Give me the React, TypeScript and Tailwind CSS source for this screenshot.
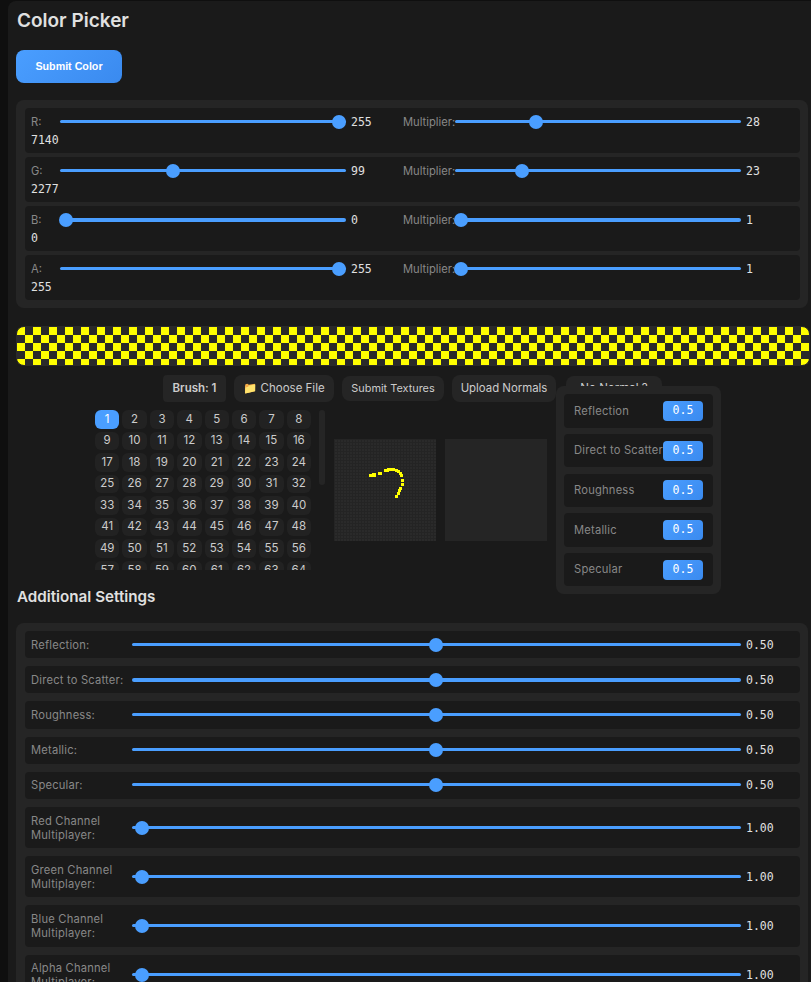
const FONT = "font-['Inter',sans-serif]";
const MONO = "font-['DejaVu_Sans_Mono',monospace]";

const COLOR_ROWS = [
  { label: "R:", value: 255, pos: 1, total: "7140", mult: 28, multPos: 0.272, thick: false },
  { label: "G:", value: 99, pos: 0.388, total: "2277", mult: 23, multPos: 0.22, thick: false },
  { label: "B:", value: 0, pos: -0.003, total: "0", mult: 1, multPos: -0.003, thick: true },
  { label: "A:", value: 255, pos: 1, total: "255", mult: 1, multPos: -0.003, thick: false },
];

const MATERIALS = ["Reflection", "Direct to Scatter", "Roughness", "Metallic", "Specular"];

const SETTINGS = [
  { label: "Reflection:", value: "0.50", pos: 0.4985, thick: false },
  { label: "Direct to Scatter:", value: "0.50", pos: 0.4985, thick: true },
  { label: "Roughness:", value: "0.50", pos: 0.4985, thick: false },
  { label: "Metallic:", value: "0.50", pos: 0.4985, thick: false },
  { label: "Specular:", value: "0.50", pos: 0.4985, thick: false },
  { label: "Red Channel Multiplayer:", value: "1.00", pos: 0.005, thick: false },
  { label: "Green Channel Multiplayer:", value: "1.00", pos: 0.005, thick: false },
  { label: "Blue Channel Multiplayer:", value: "1.00", pos: 0.005, thick: false },
  { label: "Alpha Channel Multiplayer:", value: "1.00", pos: 0.005, thick: false },
];

const BRUSHES = Array.from({ length: 72 }, (_, i) => i + 1);

// pixels of the painted stroke, in canvas coordinates
const STROKE = [
  [35, 35, 7, 3], [38, 34, 4, 3], [44, 33, 4, 3], [50, 30, 5, 3], [53, 29, 8, 3], [61, 30, 3, 3],
  [63, 31, 3, 3], [65, 33, 3, 3], [66, 35, 3, 3], [67, 40, 3, 3], [67, 44, 3, 3], [65, 48, 3, 3],
  [64, 50, 3, 3], [63, 53, 3, 3], [61, 56, 3, 3],
];

function Slider({ pos, width, thick }: { pos: number; width: string; thick?: boolean }) {
  // thumb travels inside the track, 7px from each end
  return (
    <div className={`relative h-[14px] shrink-0 ${width}`}>
      <div className={`absolute left-0 right-0 top-[5px] rounded-full bg-[#4a9eff] ${thick ? "h-1" : "h-[3px]"}`} />
      <div
        className="absolute top-0 h-[14px] w-[14px] rounded-full bg-[#4a9eff]"
        style={{ left: `calc(${pos} * (100% - 14px))` }}
      />
    </div>
  );
}

function ColorRow({ row }: { row: (typeof COLOR_ROWS)[number] }) {
  return (
    <div className="flex h-[45px] flex-wrap content-start items-center rounded bg-[#1a1a1a] pl-[6px] pt-[7px]">
      <span className="w-[29px] text-[11.2px] leading-[14px] text-[#888]">{row.label}</span>
      <Slider pos={row.pos} width="w-[286px]" thick={row.thick} />
      <span className={`${MONO} w-[57px] pl-[5px] text-[11.52px] leading-[14px] text-[#e0e0e0]`}>{row.value}</span>
      <span className="w-[52px] whitespace-nowrap text-[11.2px] leading-[14px] text-[#888]">Multiplier:</span>
      <Slider pos={row.multPos} width="w-[286px]" thick={row.thick} />
      <span className={`${MONO} pl-[5px] text-[11.52px] leading-[14px] text-[#e0e0e0]`}>{row.mult}</span>
      <span className={`${MONO} mt-1 w-full text-[11.52px] leading-[14px] text-[#e0e0e0]`}>{row.total}</span>
    </div>
  );
}

function ToolButton({ label, className }: { label: string; className: string }) {
  return (
    <div className={`flex shrink-0 items-center justify-center bg-[#252525] text-[#ccc] ${className}`}>
      {label}
    </div>
  );
}

function PaintCanvas() {
  return (
    <div className="h-[102px] w-[102px] bg-[#2a2a2a] bg-[linear-gradient(#242424_1px,transparent_1px),linear-gradient(90deg,#242424_1px,transparent_1px)] bg-[size:3px_3px]">
      <svg width="102" height="102" viewBox="0 0 102 102" shapeRendering="crispEdges">
        {STROKE.map(([x, y, w, h], i) => (
          <rect key={i} x={x} y={y} width={w} height={h} fill="#ffff00" />
        ))}
      </svg>
    </div>
  );
}

export default function App() {
  return (
    <div className={`${FONT} h-[982px] w-[811px] overflow-hidden bg-[#0f0f0f]`}>
      <div className="ml-2 mt-px rounded-tl-lg bg-[#1a1a1a] pl-2 pr-px">
        <h1 className="pl-px pt-[9px] text-[19px] font-semibold leading-[22px] text-[#e0e0e0]">Color Picker</h1>

        <button className="mt-[18px] flex h-[33px] w-[106px] items-center justify-center rounded-lg bg-[linear-gradient(135deg,#4a9eff,#3a8aef)] font-['Liberation_Sans',sans-serif] text-[10.7px] font-bold text-white">
          Submit Color
        </button>

        {/* RGBA rows */}
        <div className="mr-px mt-[17px] flex w-[792px] flex-col gap-1 rounded-lg bg-[#252525] p-2 pl-[9px] pr-2">
          {COLOR_ROWS.map((row) => (
            <ColorRow key={row.label} row={row} />
          ))}
        </div>

        {/* Checker preview */}
        <div className="mt-[18px] h-10 w-[794px] rounded-lg border border-[#2a2a2a] bg-[conic-gradient(#2a2a2a_25%,#ffff00_0_50%,#2a2a2a_0_75%,#ffff00_0)] bg-[size:16px_16px]" />

        {/* Toolbar */}
        <div className="mt-[9px] flex h-[27px] items-center pl-[147px]">
          <ToolButton label="Brush: 1" className="h-[27px] w-[63px] rounded text-[11.5px] font-semibold" />
          <ToolButton label="📁 Choose File" className="ml-2 h-[27px] w-[100px] rounded-lg text-[11.5px]" />
          <ToolButton label="Submit Textures" className="ml-2 h-[25px] w-[102px] rounded-lg text-[10.9px]" />
          <ToolButton label="Upload Normals" className="ml-2 h-[27px] w-[104px] rounded-lg text-[11.4px]" />
          <ToolButton label="No Normal ?" className="ml-[10px] h-[25px] w-[96px] rounded-lg text-[11.5px]" />
        </div>

        <div className="relative">
          <div className="flex pl-[79px] pt-2">
            {/* Brush grid */}
            <div className="h-[160px] w-[216px] overflow-hidden">
              <div className="grid grid-cols-8 gap-[3px]">
                {BRUSHES.map((n) => (
                  <div
                    key={n}
                    className={`flex h-[18.57px] items-center justify-center rounded-md text-[11.5px] ${
                      n === 1 ? "bg-[#4a9eff] text-white" : "bg-[#222222] text-[#ccc]"
                    }`}
                  >
                    {n}
                  </div>
                ))}
              </div>
            </div>
            <div className="ml-2 h-[75px] w-[6px] rounded-full bg-[#252525]" />

            {/* Canvases */}
            <div className="ml-[9px] mt-[29px] flex gap-[9px]">
              <PaintCanvas />
              <div className="h-[102px] w-[102px] bg-[#252525]" />
            </div>
          </div>

          {/* Material popover */}
          <div className="absolute left-[540px] top-[-15.7px] flex w-[165px] flex-col gap-[6.15px] rounded-lg bg-[#252525] p-2">
            {MATERIALS.map((m) => (
              <div key={m} className="flex h-[33.5px] items-center rounded bg-[#1a1a1a] pl-[10px]">
                <span className="w-[89px] whitespace-nowrap text-[11.2px] tracking-[0.2px] text-[#888]">{m}</span>
                <span className={`${MONO} flex h-5 w-10 items-center justify-center rounded bg-[linear-gradient(135deg,#4a9eff,#3a8aef)] text-[11.52px] text-white`}>
                  0.5
                </span>
              </div>
            ))}
          </div>
        </div>

        <h2 className="mt-[18px] pl-px text-[15.2px] font-semibold leading-[18px] text-[#e0e0e0]">Additional Settings</h2>

        {/* Additional settings sliders */}
        <div className="mt-[17px] flex w-[792px] flex-col gap-2 rounded-lg bg-[#252525] p-2 pl-[9px] pr-2">
          {SETTINGS.map((s) => (
            <div key={s.label} className="flex items-center rounded bg-[#1a1a1a] px-[6px] py-[6.6px]">
              <span className="w-[101px] shrink-0 text-[11.2px] leading-[14px] tracking-[0.2px] text-[#888]">{s.label}</span>
              <Slider pos={s.pos} width="w-[609px]" thick={s.thick} />
              <span className={`${MONO} pl-[5px] text-[11.52px] leading-[14px] text-[#e0e0e0]`}>{s.value}</span>
            </div>
          ))}
        </div>
      </div>
    </div>
  );
}
